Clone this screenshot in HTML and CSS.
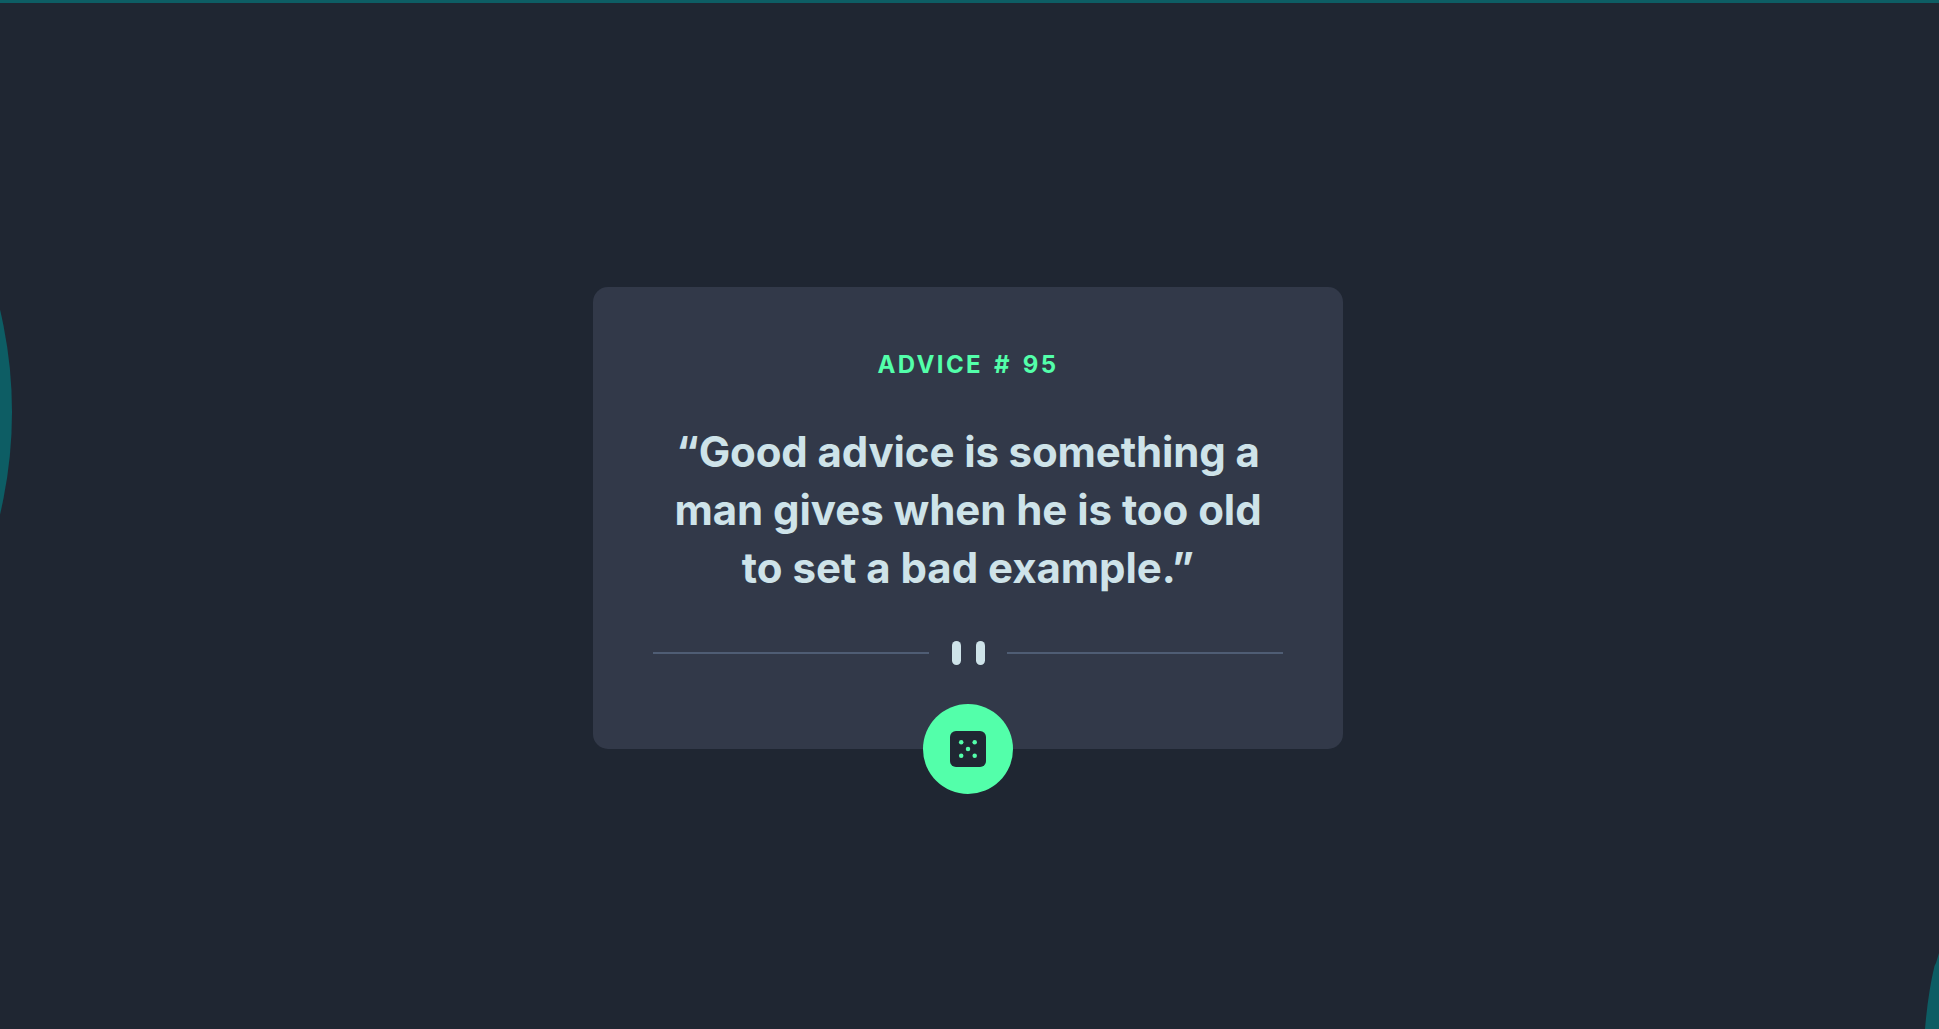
FILE: index.html
```html
<!DOCTYPE html>
<html lang="en">
<head>
<meta charset="utf-8">
<title>Advice generator</title>
<link rel="stylesheet" href="styles.css">
</head>
<body>
<div class="arc arc-left"></div>
<svg class="arc-right" width="14" height="76" viewBox="0 0 14 76"><path d="M14 0 11 10 9.5 13Q3 40 0 76H14Z" fill="#0d5d64"/></svg>
<main class="card">
  <h1 class="label">ADVICE # 95</h1>
  <p class="quote">
    <span class="line line-1">“Good advice is something a</span>
    <span class="line line-2">man gives when he is too old</span>
    <span class="line line-3">to set a bad example.”</span>
  </p>
  <div class="divider">
    <span class="rule"></span>
    <span class="bars"><i class="bar"></i><i class="bar"></i></span>
    <span class="rule"></span>
  </div>
  <button class="dice" aria-label="New advice">
    <svg width="36" height="36" viewBox="0 0 36 36"><rect width="36" height="36" rx="6" fill="#202733"/><g fill="#53ffaa"><circle cx="11.2" cy="11.2" r="2.25"/><circle cx="24.7" cy="11.2" r="2.25"/><circle cx="18" cy="18" r="2.25"/><circle cx="11.2" cy="24.7" r="2.25"/><circle cx="24.7" cy="24.7" r="2.25"/></g></svg>
  </button>
</main>
</body>
</html>
```

FILE: styles.css
```css
* { box-sizing: border-box; }
body {
  margin: 0;
  height: 100vh;
  padding: 284px 3px 0 0;
  border-top: 3px solid #0d5d64;
  overflow: hidden;
  position: relative;
  background: #1f2632;
  font-family: Inter, "Open Sans", sans-serif;
}
.arc { position: absolute; border-radius: 50%; background: #0d5d64; }
.arc-left { width: 888px; height: 888px; left: -876px; top: -35px; }
.arc-right { position: absolute; right: 0; bottom: 0; }
.card {
  position: relative;
  width: 750px;
  height: 462px;
  margin: 0 auto;
  padding: 60px 60px 0;
  border-radius: 15px;
  background: #323949;
  text-align: center;
}
.label {
  margin: 0;
  font-size: 24px;
  line-height: 36px;
  font-weight: 700;
  letter-spacing: 2.4px;
  word-spacing: 2.8px;
  color: #53ffaa;
}
.quote {
  margin: 40px 0 0;
  font-size: 42px;
  line-height: 58px;
  font-weight: 700;
  color: #cee3e9;
}
.line { display: block; white-space: nowrap; }
.line-1 { letter-spacing: -0.13px; }
.line-2 { letter-spacing: -0.05px; }
.line-3 { letter-spacing: -0.03px; }
.divider {
  display: flex;
  align-items: center;
  justify-content: space-between;
  height: 24px;
  margin-top: 44px;
}
.rule { width: 276px; height: 2px; background: #4f5d74; }
.bars { display: flex; gap: 15px; }
.bar { width: 9px; height: 24px; border-radius: 5px; background: #cee3e9; }
.dice {
  position: absolute;
  left: 330px;
  bottom: -45px;
  width: 90px;
  height: 90px;
  padding: 0;
  border: 0;
  border-radius: 50%;
  background: #53ffaa;
  display: flex;
  align-items: center;
  justify-content: center;
}
```
